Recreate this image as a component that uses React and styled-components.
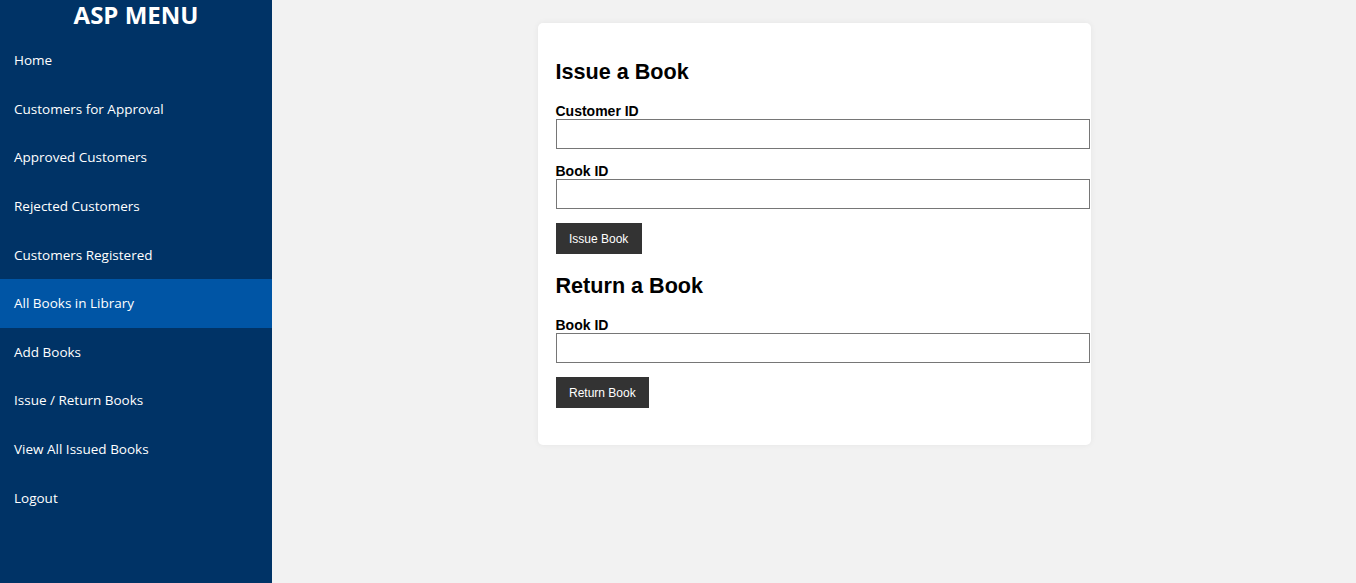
import styled, { createGlobalStyle } from 'styled-components';

const GlobalStyle = createGlobalStyle`
  html, body {
    margin: 0;
    padding: 0;
    height: 100%;
  }
  body {
    background: #f2f2f2;
    font-family: "Liberation Sans", Arial, sans-serif;
  }
  #root {
    height: 100%;
  }
`;

const StLayout = styled.div`
  display: flex;
  min-height: 583px;
`;

const StSidebar = styled.nav`
  width: 272px;
  flex-shrink: 0;
  background: #003366;
  color: #fff;
  font-family: "Open Sans", "Noto Sans", sans-serif;
`;

const StBrand = styled.h1`
  margin: 0;
  height: 35.7px;
  padding-top: 1px;
  box-sizing: border-box;
  font-size: 24px;
  line-height: 28px;
  font-weight: 700;
  text-align: center;
`;

const StNavList = styled.ul`
  list-style: none;
  margin: 0;
  padding: 0;
`;

const StNavItem = styled.li`
  height: 48.65px;
  display: flex;
  align-items: center;
  padding-left: 14px;
  font-size: 13.5px;
  background: ${(p) => (p.$active ? '#0055a5' : 'transparent')};
`;

const StMain = styled.main`
  flex: 1;
  display: flex;
  justify-content: center;
  align-items: flex-start;
  padding-top: 23px;
`;

const StCard = styled.section`
  width: 516px;
  padding: 36px 19px 37px 18px;
  background: #fff;
  border-radius: 5px;
  box-shadow: 0 0 6px rgba(0, 0, 0, 0.06);
`;

const StHeading = styled.h2`
  margin: ${(p) => (p.$first ? '0' : '19px')} 0 19px;
  font-size: 21.6px;
  line-height: 25px;
  font-weight: 700;
  color: #000;
`;

const StField = styled.div`
  margin-bottom: 14px;
`;

const StLabel = styled.label`
  display: block;
  font-size: 14px;
  line-height: 16px;
  font-weight: 700;
  color: #000;
`;

const StInput = styled.input`
  display: block;
  width: 100%;
  height: 28px;
  margin: 0;
  padding: 0 8px;
  border: 1px solid #767676;
  box-sizing: content-box;
  font-size: 13px;
`;

const StButton = styled.button`
  display: block;
  height: 31px;
  padding: 0 13.5px;
  border: none;
  background: #333;
  color: #fff;
  font-family: "Liberation Sans", Arial, sans-serif;
  font-size: 12px;
  cursor: pointer;
`;

const navItems = [
  'Home',
  'Customers for Approval',
  'Approved Customers',
  'Rejected Customers',
  'Customers Registered',
  'All Books in Library',
  'Add Books',
  'Issue / Return Books',
  'View All Issued Books',
  'Logout',
];

const App = () => {
  return (
    <>
      <GlobalStyle />
      <StLayout>
        <StSidebar>
          <StBrand>ASP MENU</StBrand>
          <StNavList>
            {navItems.map((item) => (
              <StNavItem key={item} $active={item === 'All Books in Library'}>
                {item}
              </StNavItem>
            ))}
          </StNavList>
        </StSidebar>
        <StMain>
          <StCard>
            <StHeading $first>Issue a Book</StHeading>
            <StField>
              <StLabel htmlFor="customerId">Customer ID</StLabel>
              <StInput id="customerId" type="text" />
            </StField>
            <StField>
              <StLabel htmlFor="bookId">Book ID</StLabel>
              <StInput id="bookId" type="text" />
            </StField>
            <StButton>Issue Book</StButton>

            <StHeading>Return a Book</StHeading>
            <StField>
              <StLabel htmlFor="returnBookId">Book ID</StLabel>
              <StInput id="returnBookId" type="text" />
            </StField>
            <StButton>Return Book</StButton>
          </StCard>
        </StMain>
      </StLayout>
    </>
  );
};

export default App;
